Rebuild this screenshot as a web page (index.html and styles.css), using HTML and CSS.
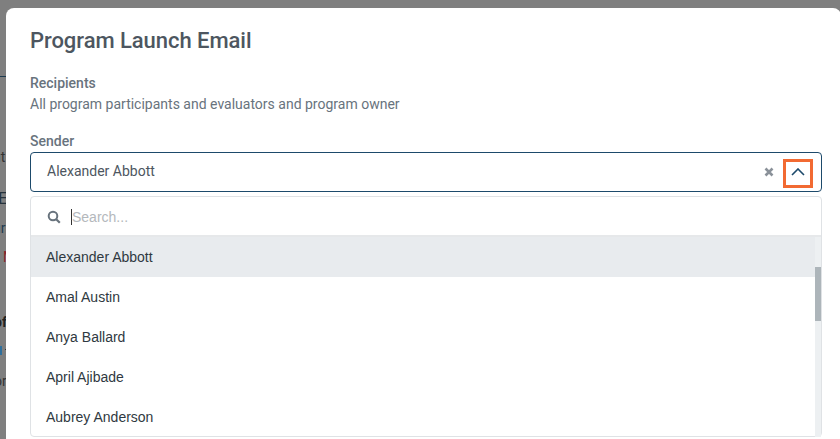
FILE: index.html
```html
<!DOCTYPE html>
<html>
<head>
    <meta charset="UTF-8">
    <title>Program Launch Email</title>
    <link rel="stylesheet" href="styles.css">
</head>
<body>
    <div class="behind">
        <div class="behind-line"></div>
        <span class="behind-text b1">ut</span>
        <span class="behind-text b2">E</span>
        <span class="behind-text b3">ur</span>
        <span class="behind-text b4">M</span>
        <span class="behind-text b5">of</span>
        <div class="behind-block"></div>
        <div class="behind-dash"></div>
        <span class="behind-text b7">or</span>
    </div>
    <div class="modal">
        <h1 class="title">Program Launch Email</h1>
        <div class="label">Recipients</div>
        <div class="recipients">All program participants and evaluators and program owner</div>
        <div class="label sender-label">Sender</div>
        <div class="select">
            <span class="select-value">Alexander Abbott</span>
            <svg class="clear" width="10" height="10" viewBox="0 0 10 10"><path d="M1.5 1.5l7 7M8.5 1.5l-7 7" stroke="#8a9199" stroke-width="2.6" fill="none"/></svg>
            <div class="toggle">
                <svg class="chevron" width="14" height="8" viewBox="0 0 14 8"><path d="M1 7l6-6 6 6" stroke="#1d4a6b" stroke-width="1.6" fill="none"/></svg>
            </div>
        </div>
        <div class="dropdown">
            <div class="search">
                <svg class="search-icon" width="14" height="14" viewBox="0 0 14 14"><circle cx="6" cy="6" r="4.3" stroke="#68737d" stroke-width="2" fill="none"/><path d="M9.2 9.2l3.6 3.6" stroke="#68737d" stroke-width="2.2" fill="none"/></svg>
                <span class="caret"></span>
                <span class="placeholder">Search...</span>
            </div>
            <div class="list">
                <div class="options">
                    <div class="option active">Alexander Abbott</div>
                    <div class="option">Amal Austin</div>
                    <div class="option">Anya Ballard</div>
                    <div class="option">April Ajibade</div>
                    <div class="option">Aubrey Anderson</div>
                </div>
                <div class="scrollbar"><div class="thumb"></div></div>
            </div>
        </div>
    </div>
</body>
</html>
```
FILE: styles.css
```css
* {
    padding: 0;
    margin: 0;
    box-sizing: border-box;
}
html, body {
    height: 439px;
    overflow: hidden;
}
body {
    background: #7f7f7f;
    font-family: Roboto, "Liberation Sans", sans-serif;
    position: relative;
}
.behind {
    position: absolute;
    left: 0;
    top: 0;
    width: 6px;
    height: 439px;
    overflow: hidden;
}
.behind-line {
    position: absolute;
    top: 76px;
    left: 0;
    width: 6px;
    height: 1px;
    background: #1d3a4f;
}
.behind-block {
    position: absolute;
    top: 346px;
    left: 0;
    width: 2px;
    height: 9px;
    background: #2f6f9c;
}
.behind-dash {
    position: absolute;
    top: 349px;
    left: 5px;
    width: 1px;
    height: 1px;
    background: #333;
}
.behind-text {
    position: absolute;
    font-size: 14px;
    line-height: 16px;
    color: #333;
}
.b1 { top: 149px; left: -7px; }
.b2 { top: 188px; left: -2px; font-size: 17px; line-height: 20px; color: #26323c; }
.b3 { top: 220px; left: -7px; color: #1f3b4f; }
.b4 { top: 249px; left: 3px; color: #8a1f2a; }
.b5 { top: 314px; left: -6px; font-weight: 700; color: #222; }
.b7 { top: 373px; left: -6px; }
.modal {
    position: absolute;
    left: 6px;
    top: 8px;
    width: 835px;
    height: 431px;
    background: #fff;
    border-radius: 8px 8px 0 0;
    padding: 17px 19px 0 24px;
}
.title {
    font-size: 22px;
    font-weight: 500;
    line-height: 32px;
    letter-spacing: -0.05px;
    color: #4d5660;
    margin-bottom: 17px;
}
.label {
    font-size: 14px;
    font-weight: 500;
    line-height: 18px;
    color: #68737d;
}
.recipients {
    font-size: 14px;
    line-height: 20px;
    margin-top: 2px;
    color: #68737d;
}
.sender-label {
    margin-top: 18px;
    margin-bottom: 2px;
}
.select {
    height: 40px;
    border: 1px solid #1d4a6b;
    border-radius: 4px;
    display: flex;
    align-items: center;
    padding: 0 8px 0 16px;
}
.select-value {
    flex: 1;
    font-size: 14px;
    margin-bottom: 2px;
    color: #4d5660;
}
.clear {
    margin-right: 9px;
}
.toggle {
    width: 30px;
    height: 29px;
    margin-top: 3px;
    border: 3px solid #f26a32;
    display: flex;
    align-items: center;
    justify-content: center;
}
.chevron {
    margin-top: -4px;
}
.dropdown {
    margin-top: 4px;
    border: 1px solid #dfe2e5;
    border-radius: 4px;
    height: 241px;
    font-family: "Liberation Sans", sans-serif;
}
.search {
    height: 40px;
    display: flex;
    align-items: center;
    padding: 2px 0 0 16px;
    border-bottom: 2px solid #e6e8ea;
}
.search-icon {
    margin-right: 10px;
}
.caret {
    width: 1px;
    height: 16px;
    background: #333;
}
.placeholder {
    font-size: 14px;
    color: #b4b8bc;
}
.list {
    display: flex;
    height: 200px;
}
.options {
    flex: 1;
}
.option {
    height: 40px;
    line-height: 40px;
    padding-left: 15px;
    font-size: 14px;
    color: #2f3941;
}
.active {
    background: #e8ebee;
}
.scrollbar {
    width: 6px;
    background: #edf0f2;
    padding-top: 30px;
}
.thumb {
    height: 54px;
    background: #adb5ba;
}
```
